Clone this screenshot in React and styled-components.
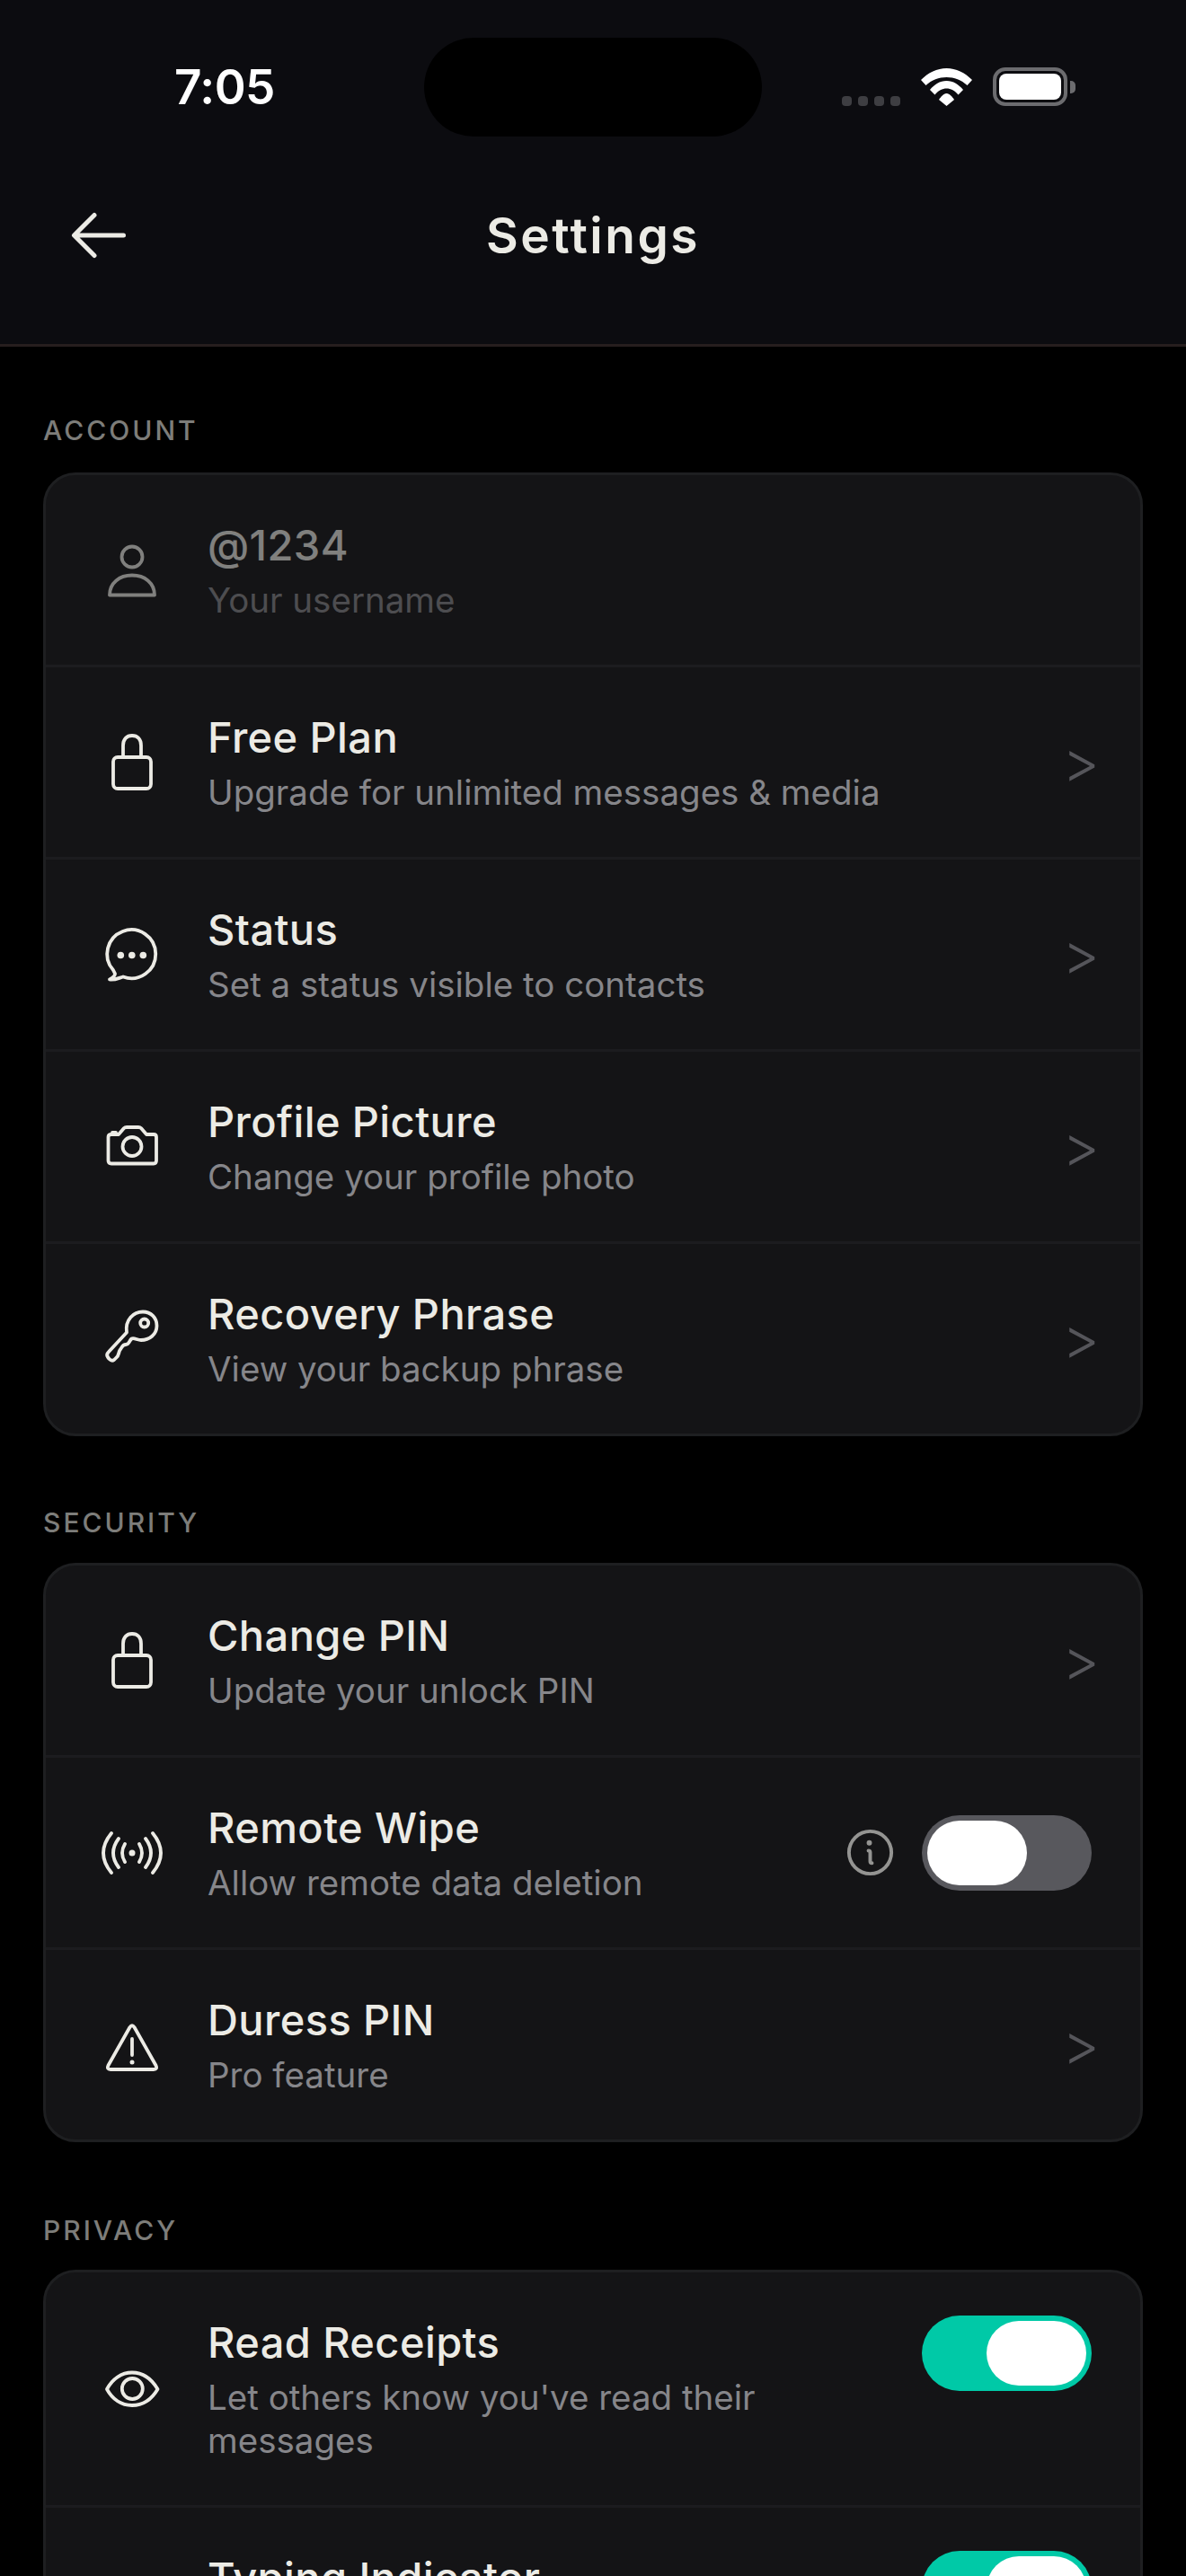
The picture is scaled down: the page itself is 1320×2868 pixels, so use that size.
import React from "react";
import styled, { createGlobalStyle } from "styled-components";
import { PiArrowLeft, PiInfo } from "react-icons/pi";

const GlobalStyle = createGlobalStyle`
  html, body {
    margin: 0;
    padding: 0;
    background: #000;
  }
  * {
    box-sizing: border-box;
  }
`;

const Page = styled.div`
  width: 1320px;
  height: 2868px;
  overflow: hidden;
  background: #000;
  font-family: "Inter", "Liberation Sans", sans-serif;
`;

const Header = styled.header`
  height: 386px;
  background: #0c0c10;
  border-bottom: 3px solid #271e1e;
`;

const StatusBar = styled.div`
  display: grid;
  grid-template-columns: 472px 376px 1fr;
  padding-top: 42px;
`;

const Time = styled.div`
  padding: 25px 0 0 194px;
  font-size: 53px;
  line-height: 60px;
  font-weight: 600;
  letter-spacing: -0.5px;
  color: #fff;
`;

const Island = styled.div`
  height: 110px;
  border-radius: 55px;
  background: #000;
`;

const StatusIcons = styled.div`
  display: flex;
  align-items: flex-end;
  height: 76px;
  padding-left: 89px;
`;

const SignalDots = styled.div`
  display: flex;
  gap: 7px;
  margin-right: 23px;
`;

const Dot = styled.span`
  width: 11px;
  height: 11px;
  border-radius: 4px;
  background: #3e3e42;
`;

const Wifi = styled.svg`
  width: 57px;
  height: 42px;
  margin-right: 23px;
`;

const Battery = styled.div`
  display: flex;
  align-items: center;
`;

const BatteryShell = styled.div`
  width: 83px;
  height: 43px;
  padding: 3px;
  border: 4px solid #6c6c6f;
  border-radius: 14px;
`;

const BatteryFill = styled.div`
  height: 100%;
  border-radius: 8px;
  background: #fff;
`;

const BatteryTip = styled.div`
  width: 6px;
  height: 14px;
  margin-left: 3px;
  border-radius: 0 5px 5px 0;
  background: #6c6c6f;
`;

const Nav = styled.nav`
  position: relative;
  height: 84px;
  margin-top: 68px;
  color: #ecebe5;
`;

const BackButton = styled.div`
  position: absolute;
  left: 70px;
  top: 2px;
  display: flex;
`;

const NavTitle = styled.h1`
  margin: 0;
  text-align: center;
  font-size: 55px;
  line-height: 84px;
  font-weight: 600;
  letter-spacing: 2.5px;
  color: #ecebe5;
`;

const Content = styled.main`
  padding: 0 48px;
`;

const SectionLabel = styled.div`
  padding-top: ${(p) => p.$top}px;
  height: ${(p) => p.$height}px;
  font-size: 30px;
  line-height: 42px;
  font-weight: 500;
  letter-spacing: 3px;
  color: #7d7d7a;
`;

const Card = styled.section`
  border: 3px solid #1e1f21;
  border-radius: 36px;
  background: #141416;
  overflow: hidden;
`;

const Row = styled.div`
  display: flex;
  align-items: center;
  gap: 42px;
  padding: 48px 54px;
  border-top: ${(p) => (p.$first ? "none" : "3px solid #1c1c1f")};
  opacity: ${(p) => (p.$muted ? 0.5 : 1)};
`;

const IconBox = styled.div`
  flex: none;
  display: flex;
  align-items: center;
  justify-content: center;
  width: 84px;
  height: 84px;
  color: #ecebe5;
`;

const Glyph = styled.svg`
  width: 72px;
  height: 72px;
  fill: none;
  stroke: currentColor;
  stroke-width: 3.8;
  stroke-linecap: round;
  stroke-linejoin: round;
`;

const RowText = styled.div`
  flex: 1;
  min-width: 0;
`;

const RowTitle = styled.div`
  font-size: 47px;
  line-height: 60px;
  font-weight: 500;
  letter-spacing: 0.4px;
  color: #ecebe5;
`;

const RowSub = styled.div`
  margin-top: 7px;
  font-size: 38.5px;
  line-height: 48px;
  color: #86868a;
`;

const Chevron = styled.span`
  flex: none;
  margin: -2px -9px 0 0;
  font-size: 64px;
  line-height: 60px;
  font-weight: 300;
  color: #55555a;
`;

const InfoButton = styled.div`
  flex: none;
  display: flex;
  font-size: 63px;
  margin-right: -16px;
  color: #949492;
`;

const Toggle = styled.div`
  flex: none;
  display: flex;
  justify-content: ${(p) => (p.$on ? "flex-end" : "flex-start")};
  align-self: ${(p) => (p.$top ? "flex-start" : "center")};
  width: 189px;
  height: 84px;
  padding: 6px;
  border-radius: 42px;
  background: ${(p) => (p.$on ? "#00c9a7" : "#58585d")};
`;

const Thumb = styled.div`
  width: 111px;
  height: 72px;
  border-radius: 36px;
  background: #fff;
`;

const UserIcon = () => (
  <Glyph viewBox="0 0 72 72">
    <circle cx="36" cy="21" r="11.5" />
    <path d="M11 63.5C11 50 22 41.500 36 41.500S61 50 61 63.500Z" />
  </Glyph>
);

const LockIcon = () => (
  <Glyph viewBox="0 0 72 72">
    <rect x="15" y="30" width="42" height="35" rx="5" />
    <path d="M26 30V17C26 10 30 6 36 6S46 10 46 17V30" />
  </Glyph>
);

const ChatIcon = () => (
  <Glyph viewBox="0 0 72 72">
    <path d="M26 60.500A27 27 0 1 0 15 53L17 57C17 60 14 62 11 63.500C16 64.500 21 62 26 60.500Z" />
    <g fill="currentColor" stroke="none">
      <circle cx="23.300" cy="36.500" r="3.800" />
      <circle cx="35.800" cy="36.500" r="3.800" />
      <circle cx="48.300" cy="36.500" r="3.800" />
    </g>
  </Glyph>
);

const CameraIcon = () => (
  <Glyph viewBox="0 0 72 72">
    <path d="M9.500 25Q9.500 22 13 22H21L27 15Q28 14 30 14H43Q45 14 46 15L52 22H60Q63 22 63 25V51Q63 54.500 60 54.500H13Q9.500 54.500 9.500 51Z" />
    <path d="M14 20H18" />
    <circle cx="36" cy="35.500" r="10.500" />
  </Glyph>
);

const KeyIcon = () => (
  <Glyph viewBox="0 0 72 72">
    <path d="M10 50L30 28.500C28 14 38 5.500 48 5.500C57 5.500 63.500 12 63.500 21C63.500 31 55 37 46 37C42 37 38 34 35.500 35.500C33 37 33 42 29 42C25 42 25 45 22.500 48C20.500 51 22 54 18 57L16 59C14 60.500 12 59.500 10.500 58L9 56C7.500 54 8 52 10 50Z" />
    <circle cx="49.700" cy="18" r="4.500" />
  </Glyph>
);

const BroadcastIcon = () => (
  <Glyph viewBox="0 0 72 72">
    <path d="M13 14Q-5 36 13 58M21 20Q9 36 21 52M28 26Q22 36 28 46" />
    <path d="M59 14Q77 36 59 58M51 20Q63 36 51 52M44 26Q50 36 44 46" />
    <circle cx="36" cy="36" r="3.500" fill="currentColor" stroke="none" />
  </Glyph>
);

const WarningIcon = () => (
  <Glyph viewBox="0 0 72 72">
    <path d="M33.500 16Q36 12.500 38.500 16L62.500 58.500Q64.500 63 60 63H12Q7.500 63 9.500 58.500Z" />
    <path d="M36 29V47" />
    <circle cx="36" cy="55" r="2.500" fill="currentColor" stroke="none" />
  </Glyph>
);

const EyeIcon = () => (
  <Glyph viewBox="0 0 72 72">
    <path d="M8 36C14 25 24 17.500 36 17.500C48 17.500 58 25 64.500 36C58 47 48 54 36 54C24 54 14 47 8 36Z" />
    <circle cx="36.300" cy="35.500" r="11.500" />
  </Glyph>
);

const SettingRow = ({ icon: Icon, title, sub, first, muted, children }) => (
  <Row $first={first} $muted={muted}>
    <IconBox>
      <Icon />
    </IconBox>
    <RowText>
      <RowTitle>{title}</RowTitle>
      <RowSub>{sub}</RowSub>
    </RowText>
    {children}
  </Row>
);

export default function App() {
  return (
    <Page>
      <GlobalStyle />
      <Header>
        <StatusBar>
          <Time>7:05</Time>
          <Island />
          <StatusIcons>
            <SignalDots>
              <Dot />
              <Dot />
              <Dot />
              <Dot />
            </SignalDots>
            <Wifi viewBox="0 0 57 42">
              <g fill="#fff">
                <path d="M0 13C8 5 18 0 28.500 0C39 0 49 5 57 13L51.500 19C45 13 37 10 28.500 10C20 10 12 13 5.500 19Z" />
                <path d="M10 24C15 18 21 14 28.500 14C36 14 42 18 47 24L41.500 29.500C38 25 33 22.500 28.500 22.500C24 22.500 19 25 15.500 29.500Z" />
                <path d="M20 35C22 32 25 28 28.500 28C32 28 35 32 37 35L28.500 42Z" />
              </g>
            </Wifi>
            <Battery>
              <BatteryShell>
                <BatteryFill />
              </BatteryShell>
              <BatteryTip />
            </Battery>
          </StatusIcons>
        </StatusBar>
        <Nav>
          <BackButton>
            <PiArrowLeft size={80} />
          </BackButton>
          <NavTitle>Settings</NavTitle>
        </Nav>
      </Header>

      <Content>
        <SectionLabel $top={72} $height={140}>ACCOUNT</SectionLabel>
        <Card>
          <SettingRow first muted icon={UserIcon} title="@1234" sub="Your username" />
          <SettingRow icon={LockIcon} title="Free Plan" sub="Upgrade for unlimited messages & media">
            <Chevron>&gt;</Chevron>
          </SettingRow>
          <SettingRow icon={ChatIcon} title="Status" sub="Set a status visible to contacts">
            <Chevron>&gt;</Chevron>
          </SettingRow>
          <SettingRow icon={CameraIcon} title="Profile Picture" sub="Change your profile photo">
            <Chevron>&gt;</Chevron>
          </SettingRow>
          <SettingRow icon={KeyIcon} title="Recovery Phrase" sub="View your backup phrase">
            <Chevron>&gt;</Chevron>
          </SettingRow>
        </Card>

        <SectionLabel $top={75} $height={141}>SECURITY</SectionLabel>
        <Card>
          <SettingRow first icon={LockIcon} title="Change PIN" sub="Update your unlock PIN">
            <Chevron>&gt;</Chevron>
          </SettingRow>
          <SettingRow icon={BroadcastIcon} title="Remote Wipe" sub="Allow remote data deletion">
            <InfoButton>
              <PiInfo />
            </InfoButton>
            <Toggle>
              <Thumb />
            </Toggle>
          </SettingRow>
          <SettingRow icon={WarningIcon} title="Duress PIN" sub="Pro feature">
            <Chevron>&gt;</Chevron>
          </SettingRow>
        </Card>

        <SectionLabel $top={77} $height={142}>PRIVACY</SectionLabel>
        <Card>
          <SettingRow first icon={EyeIcon} title="Read Receipts" sub="Let others know you've read their messages">
            <Toggle $on $top>
              <Thumb />
            </Toggle>
          </SettingRow>
          <SettingRow icon={ChatIcon} title="Typing Indicator" sub="Show when you're typing">
            <Toggle $on $top>
              <Thumb />
            </Toggle>
          </SettingRow>
        </Card>
      </Content>
    </Page>
  );
}
